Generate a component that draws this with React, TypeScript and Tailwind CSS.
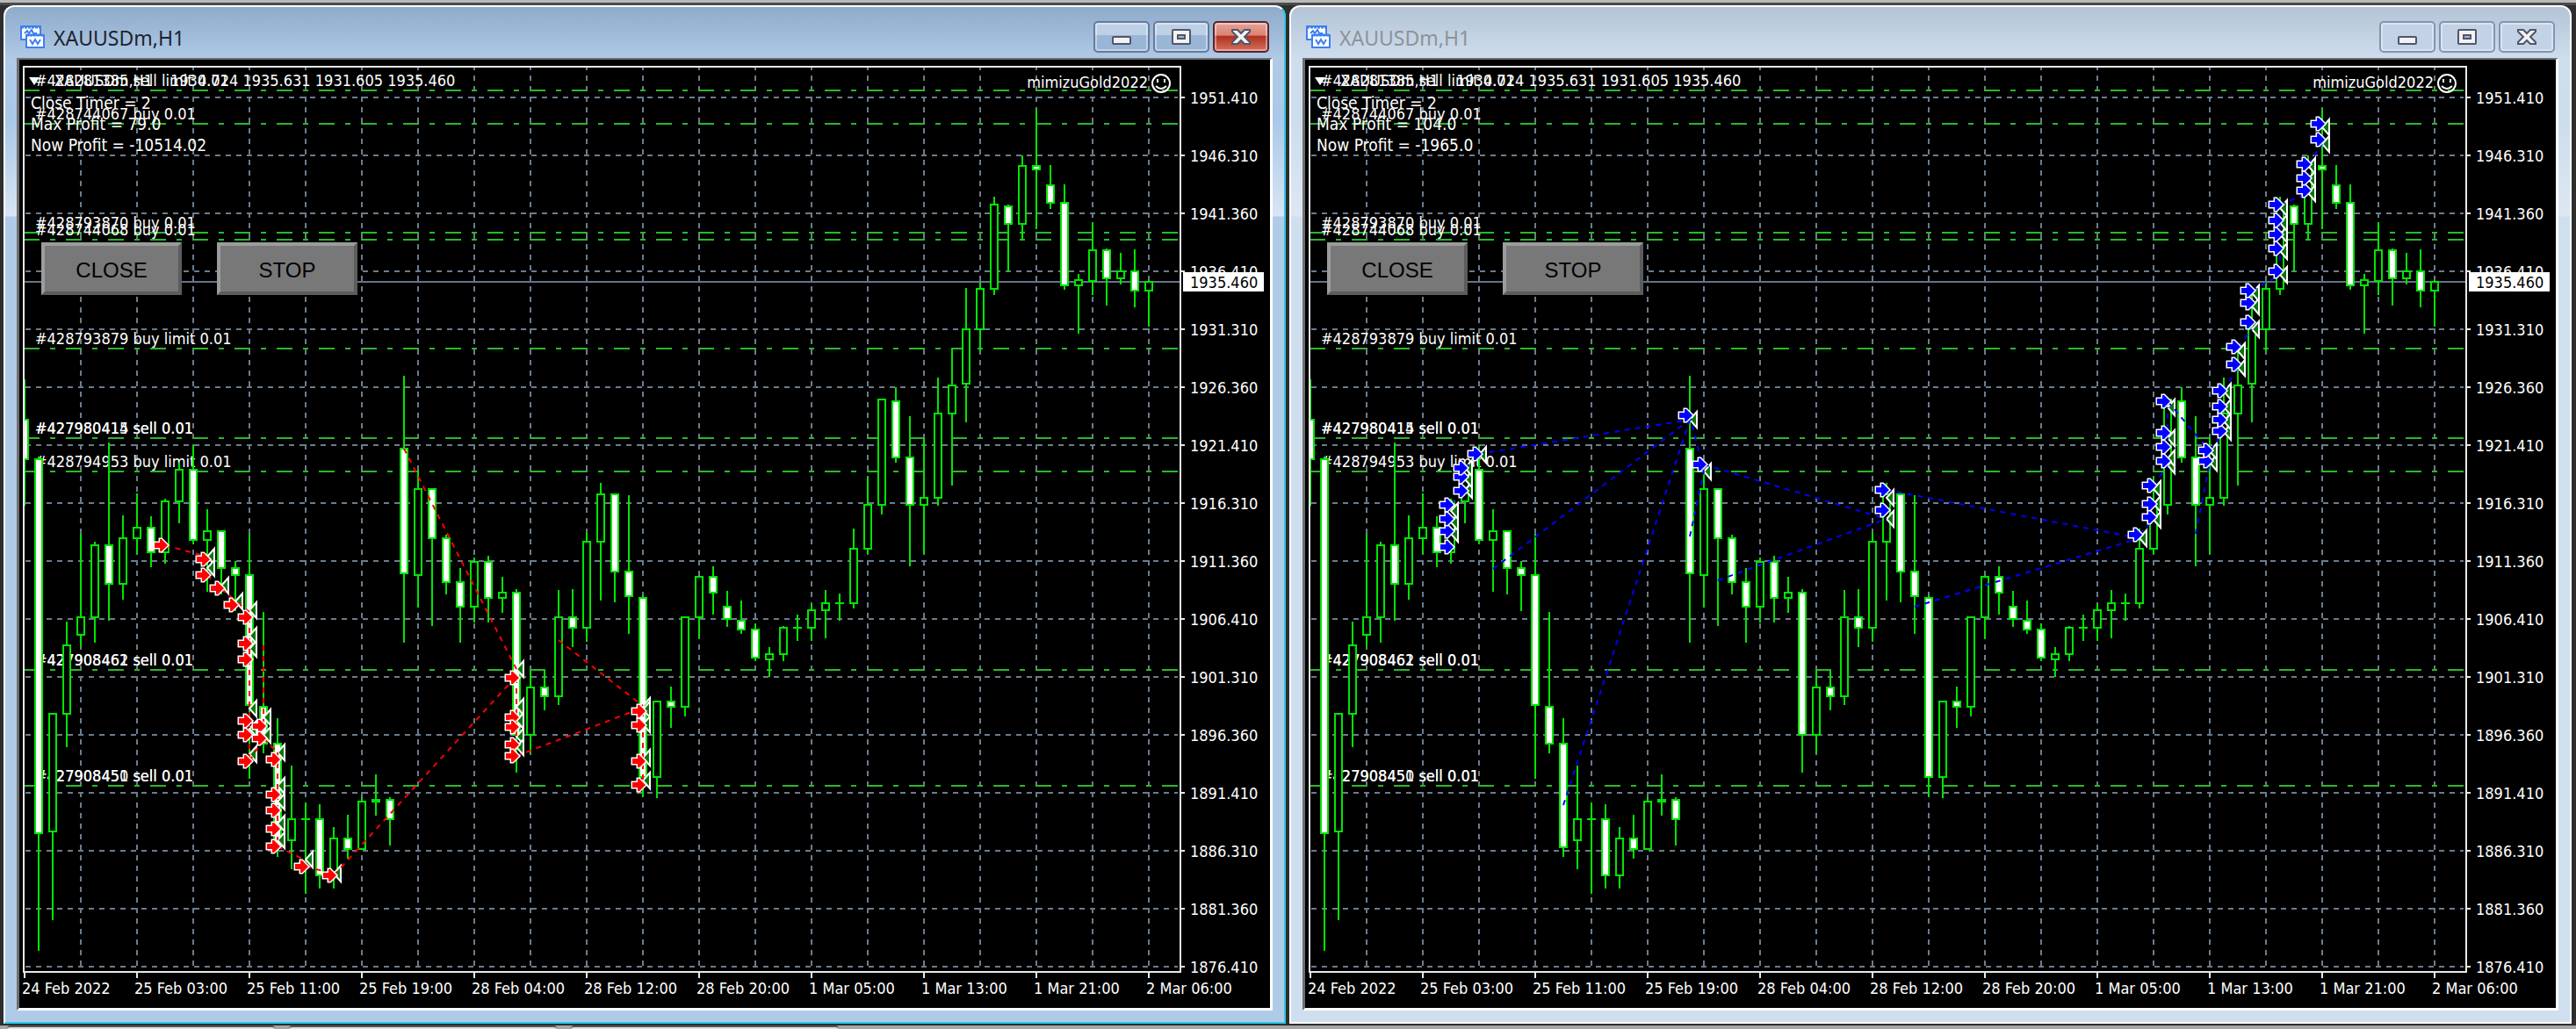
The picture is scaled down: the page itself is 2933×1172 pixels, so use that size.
import React from 'react';
import clsx from 'clsx';

type Bar = [high: number, top: number, bottom: number, low: number, kind: 'up' | 'down' | 'flat'];
type Mark = [bar: number, y: number];
type Segment = [x1: number, y1: number, x2: number, y2: number];

// Plot geometry, in chart units
const LEFT = 28;
const RIGHT = 1344;
const TOP = 76;
const BOTTOM = 1107;
const STEP = 16;

const barX = (i: number) => LEFT + i * STEP;

const bars: Bar[] = [
  [432, 478, 523, 576, 'down'],
  [520, 523, 949, 1083, 'down'],
  [813, 813, 947, 1048, 'up'],
  [708, 735, 813, 851, 'up'],
  [608, 703, 723, 737, 'up'],
  [617, 621, 703, 732, 'up'],
  [504, 621, 665, 707, 'down'],
  [587, 613, 665, 683, 'up'],
  [562, 601, 613, 631, 'up'],
  [588, 601, 629, 646, 'down'],
  [568, 571, 629, 642, 'up'],
  [527, 535, 571, 596, 'up'],
  [507, 535, 615, 619, 'down'],
  [580, 605, 615, 674, 'up'],
  [605, 605, 647, 677, 'down'],
  [639, 647, 655, 696, 'down'],
  [608, 655, 803, 887, 'down'],
  [697, 805, 847, 858, 'down'],
  [818, 847, 965, 976, 'down'],
  [872, 933, 957, 990, 'up'],
  [914, 933, 933, 1018, 'flat'],
  [916, 933, 997, 1012, 'down'],
  [942, 955, 997, 1012, 'up'],
  [928, 955, 967, 978, 'down'],
  [908, 913, 967, 967, 'up'],
  [882, 911, 913, 929, 'up'],
  [908, 911, 933, 963, 'down'],
  [428, 511, 653, 732, 'down'],
  [535, 557, 655, 692, 'up'],
  [557, 557, 613, 713, 'down'],
  [609, 613, 663, 677, 'down'],
  [647, 663, 691, 732, 'down'],
  [635, 640, 691, 709, 'up'],
  [633, 640, 681, 709, 'down'],
  [657, 675, 681, 698, 'up'],
  [671, 675, 837, 880, 'down'],
  [763, 783, 837, 858, 'up'],
  [763, 783, 793, 809, 'down'],
  [672, 703, 793, 803, 'up'],
  [671, 703, 715, 737, 'down'],
  [606, 617, 715, 731, 'up'],
  [550, 563, 617, 684, 'up'],
  [563, 563, 651, 686, 'down'],
  [564, 651, 679, 722, 'down'],
  [678, 681, 885, 908, 'down'],
  [799, 799, 885, 909, 'up'],
  [782, 799, 805, 829, 'down'],
  [703, 703, 805, 816, 'up'],
  [655, 657, 703, 727, 'up'],
  [645, 657, 675, 700, 'down'],
  [673, 691, 705, 714, 'down'],
  [684, 707, 717, 722, 'down'],
  [710, 717, 749, 753, 'down'],
  [737, 745, 751, 771, 'up'],
  [713, 715, 745, 753, 'up'],
  [700, 715, 715, 730, 'flat'],
  [688, 695, 715, 730, 'up'],
  [672, 687, 695, 727, 'up'],
  [676, 687, 687, 707, 'flat'],
  [602, 625, 687, 693, 'up'],
  [543, 575, 625, 631, 'up'],
  [455, 455, 575, 586, 'up'],
  [441, 457, 521, 527, 'down'],
  [474, 521, 575, 645, 'down'],
  [499, 567, 575, 631, 'up'],
  [430, 471, 567, 576, 'up'],
  [397, 439, 471, 553, 'up'],
  [328, 375, 437, 481, 'up'],
  [321, 329, 375, 400, 'up'],
  [224, 233, 329, 336, 'up'],
  [233, 235, 255, 309, 'down'],
  [177, 189, 255, 273, 'up'],
  [124, 189, 193, 261, 'down'],
  [188, 211, 231, 238, 'down'],
  [210, 231, 325, 330, 'down'],
  [312, 319, 325, 380, 'up'],
  [253, 285, 320, 336, 'up'],
  [283, 285, 317, 348, 'down'],
  [288, 309, 317, 324, 'up'],
  [284, 309, 331, 350, 'down'],
  [319, 321, 331, 372, 'up'],
];

const prices = [
  '1951.410', '1946.310', '1941.360', '1936.410', '1931.310', '1926.360', '1921.410', '1916.310',
  '1911.360', '1906.410', '1901.310', '1896.360', '1891.410', '1886.310', '1881.360', '1876.410',
];

const times = [
  '24 Feb 2022', '25 Feb 03:00', '25 Feb 11:00', '25 Feb 19:00', '28 Feb 04:00', '28 Feb 12:00',
  '28 Feb 20:00', '1 Mar 05:00', '1 Mar 13:00', '1 Mar 21:00', '2 Mar 06:00',
];

const orders: { y: number; labels: string[] }[] = [
  { y: 103, labels: ['#428281385 sell limit 0.01'] },
  { y: 141, labels: ['#428744067 buy 0.01'] },
  { y: 265, labels: ['#428793870 buy 0.01'] },
  { y: 273, labels: ['#428744068 buy 0.01'] },
  { y: 397, labels: ['#428793879 buy limit 0.01'] },
  { y: 499, labels: ['#427980414 sell 0.01', '#427980415 sell 0.01'] },
  { y: 537, labels: ['#428794953 buy limit 0.01'] },
  { y: 763, labels: ['#427908461 sell 0.01', '#427908462 sell 0.01'] },
  { y: 895, labels: ['#427908451 sell 0.01', '#427908450 sell 0.01'] },
];

interface Trades {
  color: string;
  entries: Mark[];
  exits: Mark[];
  links: Segment[];
}

const sells: Trades = {
  color: '#ff0000',
  entries: [
    [10, 621], [13, 637], [13, 655], [14, 670], [15, 689], [16, 703], [16, 733], [16, 751],
    [16, 821], [16, 837], [16, 867], [17, 827], [17, 841], [18, 865], [18, 905], [18, 923],
    [18, 944], [18, 964], [20, 987], [22, 997], [35, 772], [35, 817], [35, 828], [35, 848],
    [35, 861], [44, 810], [44, 826], [44, 867], [44, 894],
  ],
  exits: [
    [13, 634], [13, 647], [14, 667], [15, 685], [16, 695], [16, 724], [16, 739], [16, 807],
    [16, 830], [16, 859], [17, 817], [17, 837], [18, 857], [18, 895], [18, 913], [18, 938],
    [18, 957], [20, 979], [22, 995], [35, 762], [35, 805], [35, 821], [35, 839], [35, 851],
    [44, 804], [44, 808], [44, 825], [44, 863], [44, 889],
  ],
  links: [
    [188, 621, 236, 634], [236, 655, 252, 671], [252, 671, 284, 697], [284, 703, 284, 867],
    [284, 867, 300, 841], [300, 735, 300, 827], [300, 841, 316, 857], [316, 857, 316, 957],
    [316, 964, 348, 980], [348, 987, 380, 995], [380, 997, 588, 770], [460, 511, 588, 762],
    [588, 772, 588, 851], [588, 861, 732, 806], [636, 729, 732, 804], [732, 810, 732, 889],
  ],
};

const buys: Trades = {
  color: '#0000ff',
  entries: [
    [10, 623], [10, 605], [10, 591], [10, 575], [11, 559], [11, 543], [11, 533], [12, 517],
    [27, 473], [28, 529], [41, 558], [41, 581], [59, 609], [60, 589], [60, 574], [60, 553],
    [61, 525], [61, 509], [61, 493], [61, 457], [64, 525], [64, 513], [65, 491], [65, 478],
    [65, 463], [65, 445], [66, 415], [66, 395], [67, 367], [67, 345], [67, 331], [69, 309],
    [69, 283], [69, 267], [69, 251], [69, 233], [71, 217], [71, 203], [71, 187], [72, 159],
    [72, 141],
  ],
  exits: [
    [10, 608], [10, 595], [10, 582], [11, 558], [11, 546], [11, 533], [12, 518], [27, 478],
    [28, 537], [41, 567], [41, 591], [59, 613], [60, 592], [60, 574], [60, 557], [61, 530],
    [61, 522], [61, 499], [61, 464], [64, 527], [64, 514], [65, 492], [65, 480], [65, 464],
    [65, 446], [66, 419], [66, 400], [67, 375], [67, 349], [67, 334], [69, 313], [69, 286],
    [69, 267], [69, 254], [69, 237], [71, 220], [71, 204], [71, 189], [72, 164], [72, 145],
  ],
  links: [
    [188, 575, 204, 558], [204, 533, 220, 518], [220, 517, 460, 478], [236, 648, 460, 478],
    [316, 917, 460, 478], [460, 473, 476, 537], [460, 611, 476, 537], [476, 529, 684, 591],
    [492, 661, 684, 591], [684, 558, 972, 613], [716, 691, 972, 613], [972, 609, 988, 592],
    [988, 553, 1004, 530], [1004, 525, 1004, 464], [1004, 457, 1052, 514], [1036, 608, 1052, 527],
    [1052, 513, 1068, 492], [1068, 445, 1084, 419], [1084, 395, 1100, 375], [1100, 331, 1132, 313],
    [1132, 309, 1132, 237], [1132, 233, 1164, 220], [1164, 187, 1180, 164],
  ],
};

function Candle({ bar, x }: { bar: Bar; x: number }) {
  const [high, top, bottom, low, kind] = bar;
  return (
    <g stroke="#00e600" strokeWidth={2} shapeRendering="crispEdges">
      <line x1={x} y1={high} x2={x} y2={low} />
      {kind === 'flat' ? (
        <line x1={x - 5} y1={top} x2={x + 5} y2={top} />
      ) : (
        <rect x={x - 4} y={top} width={8} height={bottom - top} fill={kind === 'down' ? '#ffffff' : '#000000'} />
      )}
    </g>
  );
}

function Chart({ id, comments, trades }: { id: string; comments: string[]; trades: Trades }) {
  const text = 'font-["DejaVu_Sans_Condensed","DejaVu_Sans",sans-serif] text-[18px]';

  return (
    <svg viewBox="22 68 1424 1080" className={clsx('block h-auto w-full bg-black', text)} fill="white" role="img" aria-label="XAUUSDm H1 chart">
      <clipPath id={id}>
        <rect x={LEFT} y={TOP} width={RIGHT - LEFT} height={BOTTOM - TOP} />
      </clipPath>

      <g clipPath={`url(#${id})`}>
        {/* Grid */}
        <g stroke="#6c7c8d" strokeWidth={2} strokeDasharray="6 6" shapeRendering="crispEdges">
          {prices.map((price, i) => (
            <line key={price} x1={29} x2={RIGHT - 3} y1={111 + i * 66} y2={111 + i * 66} />
          ))}
          {Array.from({ length: 20 }, (_, i) => (
            <line key={i} x1={92 + i * 64} x2={92 + i * 64} y1={74} y2={BOTTOM - 4} />
          ))}
        </g>

        <line x1={LEFT} x2={RIGHT} y1={321} y2={321} stroke="#64748a" strokeWidth={2} shapeRendering="crispEdges" />

        {/* Orders */}
        {orders.map((order) => (
          <g key={order.y}>
            <line
              x1={27}
              x2={RIGHT - 3}
              y1={order.y}
              y2={order.y}
              stroke="#2bb82b"
              strokeWidth={2}
              strokeDasharray="18 12 6 12"
              shapeRendering="crispEdges"
            />
            {order.labels.map((label) => (
              <text key={label} x={40} y={order.y - 5}>{label}</text>
            ))}
          </g>
        ))}

        {bars.map((bar, i) => (
          <Candle key={i} bar={bar} x={barX(i)} />
        ))}

        {/* Trades */}
        {trades.exits.map(([i, y], n) => (
          <path
            key={n}
            d="M0 0L8 -9V9Z"
            transform={`translate(${barX(i)} ${y})`}
            fill="#087808"
            stroke="white"
            strokeWidth={2}
          />
        ))}
        <g stroke={trades.color} strokeWidth={2} strokeDasharray="6 6">
          {trades.links.map(([x1, y1, x2, y2], n) => (
            <line key={n} x1={x1} y1={y1} x2={x2} y2={y2} />
          ))}
        </g>
        {trades.entries.map(([i, y], n) => (
          <path
            key={n}
            d="M3 0L-4 -7H-6V-3H-12V3H-6V7H-4Z"
            transform={`translate(${barX(i)} ${y})`}
            fill={trades.color}
            stroke="white"
            strokeWidth={3}
            paintOrder="stroke"
          />
        ))}
      </g>

      {/* Header and comments */}
      <path d="M33 88H45L39 97Z" />
      <text x={62} y={98}>XAUUSDm,H1</text>
      <text x={194} y={98}>1934.724 1935.631 1931.605 1935.460</text>
      {comments.map((comment, i) => (
        <text key={comment} x={35} y={124 + i * 24} className="text-[19px]">{comment}</text>
      ))}
      <text x={1307} y={100} textAnchor="end">mimizuGold2022</text>
      <g fill="none" stroke="white" strokeWidth={2}>
        <circle cx={1322} cy={95} r={10} />
        <path d="M1316 98Q1322 104 1328 98" />
        <path d="M1318 90V94M1326 90V94" />
      </g>

      {/* Axes */}
      <g stroke="#e8e8e8" strokeWidth={2} shapeRendering="crispEdges">
        <rect x={27} y={TOP} width={RIGHT - 27} height={BOTTOM - TOP} fill="none" />
        {prices.map((price, i) => (
          <line key={price} x1={RIGHT} x2={RIGHT + 5} y1={111 + i * 66} y2={111 + i * 66} />
        ))}
        {times.map((time, i) => (
          <line key={time} x1={28 + i * 128} x2={28 + i * 128} y1={BOTTOM} y2={BOTTOM + 7} />
        ))}
      </g>
      {prices.map((price, i) => (
        <text key={price} x={1355} y={118 + i * 66}>{price}</text>
      ))}
      {times.map((time, i) => (
        <text key={time} x={25 + i * 128} y={1132}>{time}</text>
      ))}
      <rect x={1347} y={310} width={92} height={22} />
      <text x={1355} y={328} fill="black">1935.460</text>
    </svg>
  );
}

function ChartIcon() {
  return (
    <svg width={28} height={28} viewBox="0 0 28 28" fill="white" stroke="#3f80f0" strokeWidth={2} className="shrink-0">
      <rect x={1} y={2} width={22} height={15} />
      <path d="M1 3H23" strokeWidth={3} strokeDasharray="3 1" />
      <path d="M5 10L8 7L10 10L13 6L15 10H19" fill="none" />
      <rect x={7} y={12} width={20} height={14} />
      <path d="M7 12H27" strokeWidth={3} strokeDasharray="3 1" />
      <path d="M11 17L14 22L17 17L20 22L23 17" fill="none" />
    </svg>
  );
}

function CaptionButton({ label, active, danger, children }: {
  label: string;
  active: boolean;
  danger?: boolean;
  children: React.ReactNode;
}) {
  return (
    <button
      aria-label={label}
      className={clsx(
        'flex h-9 w-16 items-center justify-center rounded-[5px] border-2 shadow-[inset_0_0_0_2px_rgba(255,255,255,0.4)]',
        !active && 'border-[#8494b4] bg-[#c3d2e4]',
        active && !danger && 'border-[#647c9e] bg-linear-to-b from-[#bdd0e6] from-45% to-[#9ab6d6] to-45%',
        active && danger && 'border-[#5c2430] bg-[linear-gradient(#e6a398,#d98272_45%,#ac2f1c_46%,#d4715c)]'
      )}
    >
      <svg width={24} height={20} viewBox="0 0 24 20" fill="#f2f2f2" stroke="#50566c" strokeWidth={2}>
        {children}
      </svg>
    </button>
  );
}

function ChartWindow({ id, active, comments, trades }: {
  id: string;
  active: boolean;
  comments: string[];
  trades: Trades;
}) {
  return (
    <section
      className={clsx(
        'flex min-w-0 flex-1 flex-col rounded-t-xl border-2 border-t-white border-l-white px-[13px] pb-[13px]',
        active
          ? 'border-r-[#2cc8e8] border-b-[#2cc8e8] bg-[linear-gradient(#8eabc9,#b0cae7_60px,#aac8e8_130px,#d8e5f4_238px,#b0cbe8_239px)]'
          : 'border-r-white border-b-white bg-[linear-gradient(#b3c4d6,#cfdeee_60px,#cddded_130px,#dde7f2_238px,#d0dfef_239px)]'
      )}
    >
      <header className="flex h-[58px] items-center gap-[10px] px-1 pt-[10px]">
        <ChartIcon />
        <h2 className={clsx('flex-1 pt-[2px] font-["Noto_Sans","Open_Sans",sans-serif] text-[23px]', active ? 'text-[#1c2430]' : 'text-[#8f9296]')}>
          XAUUSDm,H1
        </h2>
        <div className="flex gap-1">
          <CaptionButton label="Minimize" active={active}>
            <rect x={2} y={10} width={20} height={8} rx={1} />
          </CaptionButton>
          <CaptionButton label="Maximize" active={active}>
            <rect x={2} y={2} width={20} height={16} rx={1} />
            <rect x={8} y={8} width={8} height={4} fill="#9fb6d0" />
          </CaptionButton>
          <CaptionButton label="Close" active={active} danger>
            <path d="M2 2H8L12 6L16 2H22V4L16 10L22 16V18H16L12 14L8 18H2V16L8 10L2 4Z" />
          </CaptionButton>
        </div>
      </header>

      <div className="relative border-t-2 border-r-[3px] border-b-[3px] border-l-[3px] border-t-[#6f6f6f] border-r-white border-b-white border-l-[#6f6f6f]">
        <Chart id={id} comments={comments} trades={trades} />
        {/* Panel of the expert advisor, over the chart */}
        <div className="absolute top-[208px] left-[25px] flex gap-10">
          {['CLOSE', 'STOP'].map((label) => (
            <button
              key={label}
              className='h-[60px] w-40 border-4 border-t-[#9c9c9c] border-r-[#5c5c5c] border-b-[#5c5c5c] border-l-[#9c9c9c] bg-[#787878] pt-[3px] font-["Liberation_Sans",sans-serif] text-2xl text-black'
            >
              {label}
            </button>
          ))}
        </div>
      </div>
    </section>
  );
}

export default function App() {
  return (
    <div className="flex min-h-screen flex-col bg-[#2e2e2e]">
      <div className="h-[6px] border-b-[3px] border-[#4a4a4a] bg-[#b9b9b9]" />

      <main className="flex items-start gap-1 pr-[5px] pl-1">
        <ChartWindow
          id="plot-sell"
          active
          comments={['Close Timer = 2', 'Max Profit = 79.0', 'Now Profit = -10514.02']}
          trades={sells}
        />
        <ChartWindow
          id="plot-buy"
          active={false}
          comments={['Close Timer = 2', 'Max Profit = 104.0', 'Now Profit = -1965.0']}
          trades={buys}
        />
      </main>

      {/* Tops of the windows below */}
      <div className="mt-[2px] flex flex-1 gap-4 bg-[#a6a6a6] pl-2">
        <div className="h-1 w-[305px] rounded-t-sm border-t-2 border-[#555] bg-[#dde3ea]" />
        <div className="h-1 w-[305px] rounded-t-sm border-t-2 border-[#555] bg-[#dde3ea]" />
        <div className="h-1 w-[305px] rounded-t-sm border-t-2 border-[#555] bg-[#dde3ea]" />
      </div>
    </div>
  );
}
